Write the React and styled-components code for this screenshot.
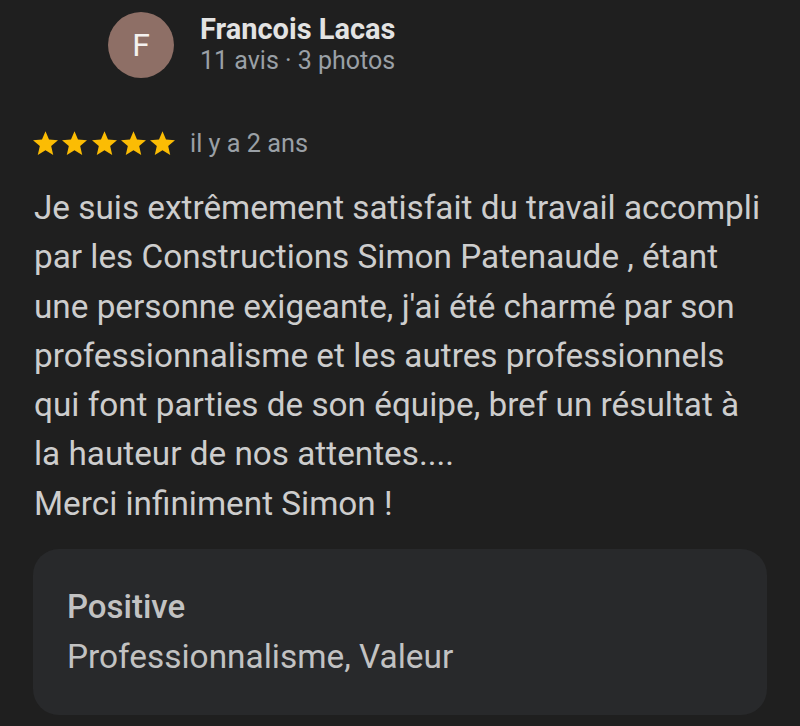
import React from "react";
import styled, { createGlobalStyle } from "styled-components";

const Global = createGlobalStyle`
  html, body {
    margin: 0;
    background: #1f1f1f;
    font-family: Roboto, "Noto Sans", sans-serif;
  }
`;

const Page = styled.div`
  width: 800px;
  height: 726px;
  overflow: hidden;
  background: #1f1f1f;
  box-sizing: border-box;
  padding: 12px 33px 0 33px;
`;

const Header = styled.div`
  display: flex;
  align-items: center;
  gap: 26px;
  padding-left: 75px;
`;

const Avatar = styled.div`
  width: 66px;
  height: 66px;
  border-radius: 50%;
  background: #8e6f66;
  color: #f4f1ef;
  display: flex;
  align-items: center;
  justify-content: center;
  font-size: 32px;
`;

const Who = styled.div`
  display: flex;
  flex-direction: column;
`;

const Name = styled.div`
  font-size: 29px;
  font-weight: 700;
  color: #e3e3e3;
  line-height: 32px;
`;

const Meta = styled.div`
  font-size: 25px;
  color: #9aa0a6;
  line-height: 32px;
`;

const RatingRow = styled.div`
  display: flex;
  align-items: center;
  gap: 15px;
  margin-top: 52px;
  height: 26px;
`;

const Stars = styled.div`
  display: flex;
  gap: 4.25px;
`;

const When = styled.span`
  font-size: 25.3px;
  color: #9aa0a6;
`;

const Body = styled.div`
  margin: 27px 0 0 1px;
  font-size: 33.3px;
  line-height: 49.3px;
  color: #cdcdcd;
`;

const Line = styled.div`
  white-space: nowrap;
`;

const Card = styled.div`
  margin-top: 21px;
  background: #28292b;
  border-radius: 26px;
  padding: 38px 34px;
  height: 166px;
  box-sizing: border-box;
`;

const CardTitle = styled.div`
  font-size: 33px;
  font-weight: 500;
  color: #c2c2c2;
  line-height: 40px;
`;

const CardText = styled.div`
  font-size: 33.4px;
  color: #c2c2c2;
  line-height: 40px;
  margin-top: 10px;
`;

const Star = () => (
  <svg width="25" height="24" viewBox="2 2 20 19">
    <path
      fill="#fbbc04"
      d="M12 17.27L18.18 21l-1.64-7.03L22 9.24l-7.19-.61L12 2 9.19 8.63 2 9.24l5.46 4.73L5.82 21z"
    />
  </svg>
);

const lines = [
  "Je suis extrêmement satisfait du travail accompli",
  "par les Constructions Simon Patenaude , étant",
  "une personne exigeante, j'ai été charmé par son",
  "professionnalisme et les autres professionnels",
  "qui font parties de son équipe, bref un résultat à",
  "la hauteur de nos attentes....",
  "Merci infiniment Simon !",
];

export default function App() {
  return (
    <Page>
      <Global />
      <Header>
        <Avatar>F</Avatar>
        <Who>
          <Name>Francois Lacas</Name>
          <Meta>11 avis · 3 photos</Meta>
        </Who>
      </Header>
      <RatingRow>
        <Stars>
          {[0, 1, 2, 3, 4].map((i) => (
            <Star key={i} />
          ))}
        </Stars>
        <When>il y a 2 ans</When>
      </RatingRow>
      <Body>
        {lines.map((l, i) => (
          <Line key={i}>{l}</Line>
        ))}
      </Body>
      <Card>
        <CardTitle>Positive</CardTitle>
        <CardText>Professionnalisme, Valeur</CardText>
      </Card>
    </Page>
  );
}
